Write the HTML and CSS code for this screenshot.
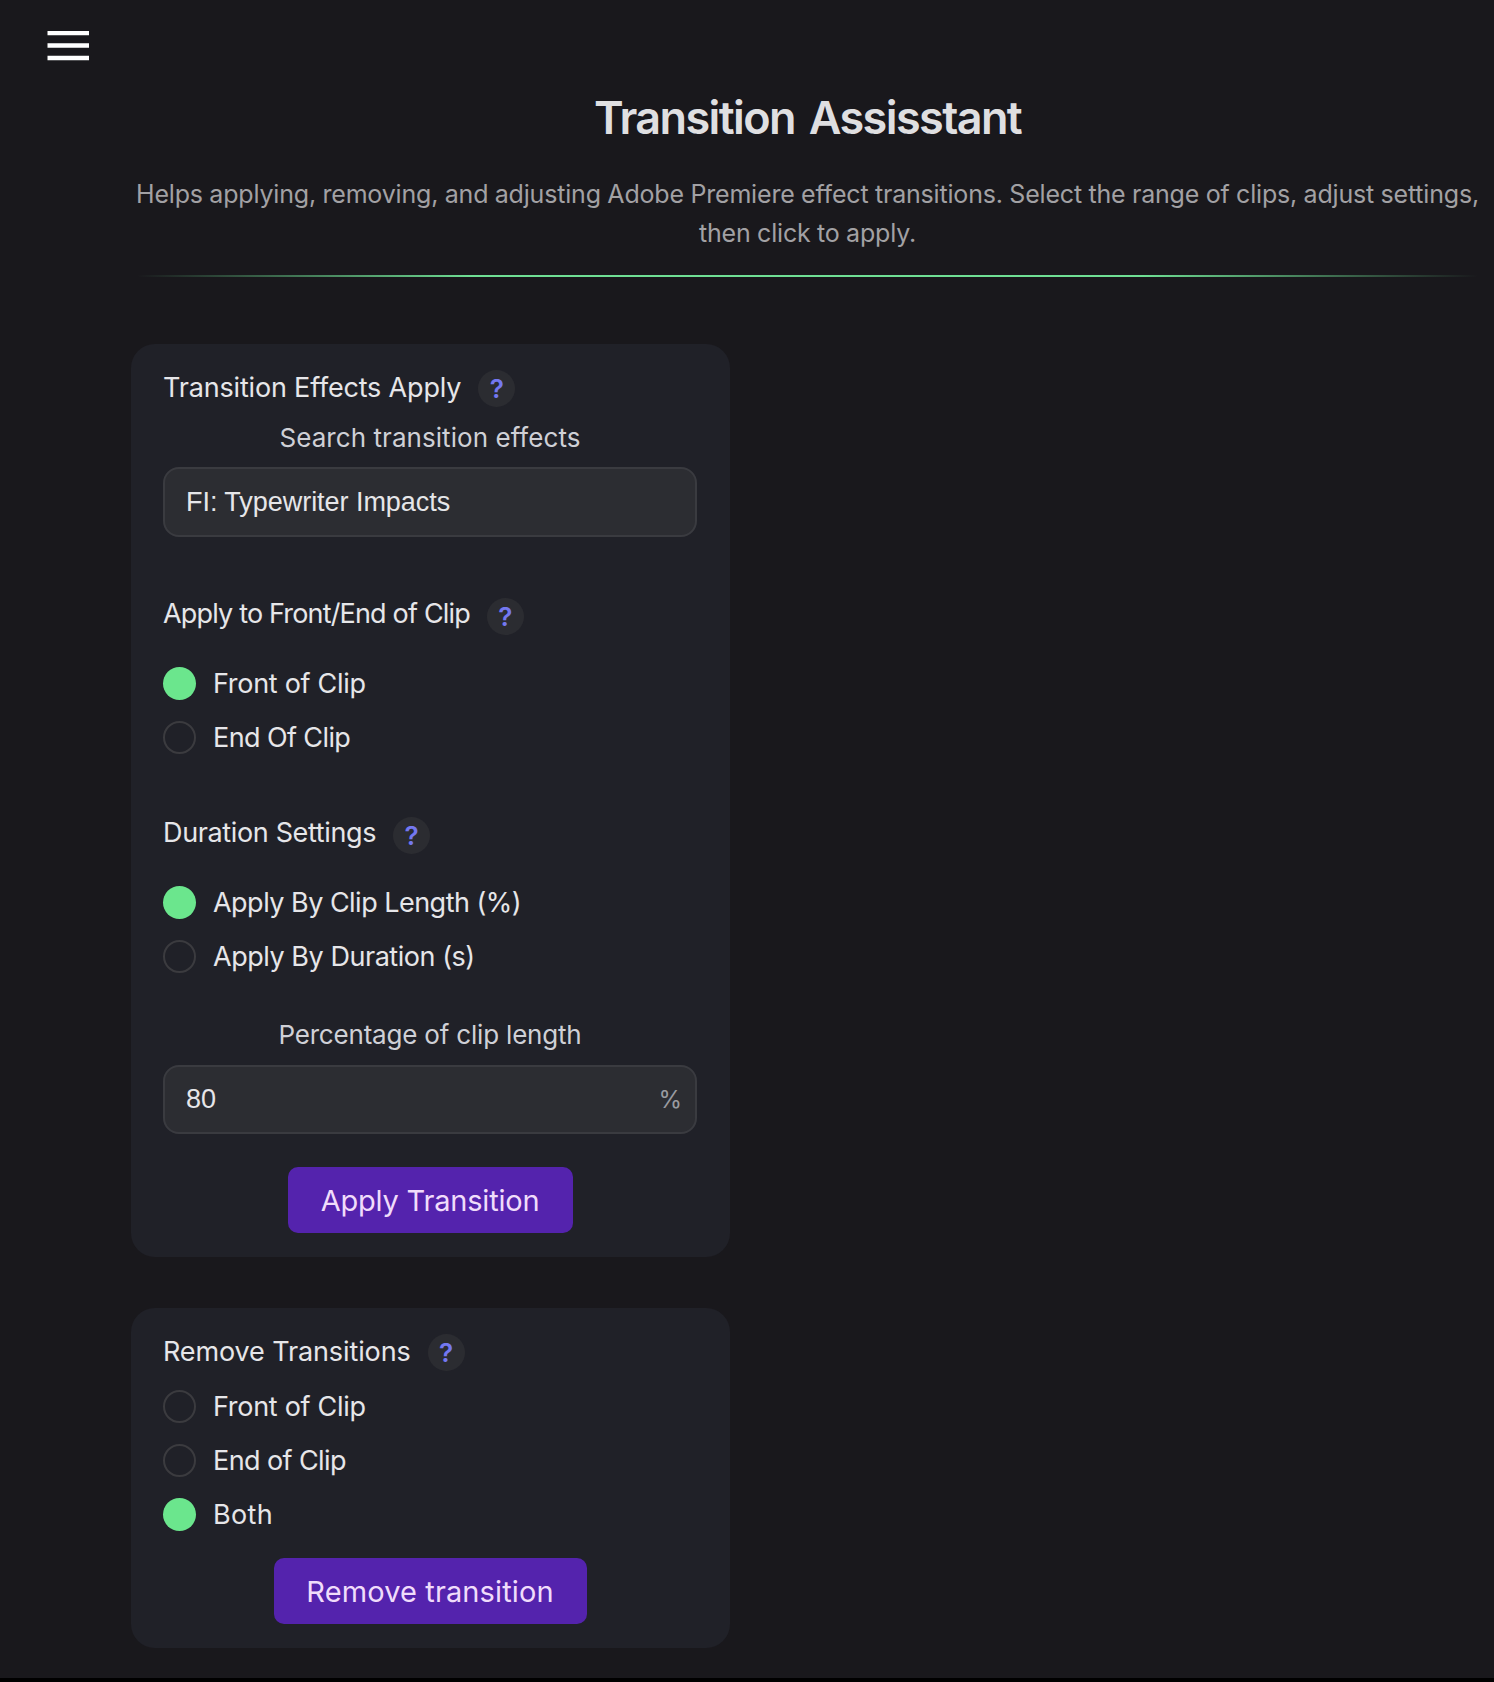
FILE: index.html
```html
<!DOCTYPE html>
<html lang="en">
<head>
<meta charset="utf-8">
<title>Transition Assisstant</title>
<link rel="stylesheet" href="styles.css">
</head>
<body>
<div class="app">
  <nav class="sidebar">
    <button class="menu" aria-label="Menu">
      <svg class="menu-icon" width="42" height="30" viewBox="0 0 42 30"><path d="M0.5 2H42M0.5 14.5H42M0.5 27H42" stroke="#fff" stroke-width="4.3"/></svg>
    </button>
  </nav>
  <main class="content">
    <header class="intro">
      <h1 class="title">Transition Assisstant</h1>
      <p class="lead">Helps applying, removing, and adjusting Adobe Premiere effect transitions. Select the range of clips, adjust settings,<br>then click to apply.</p>
      <div class="rule"></div>
    </header>
    <section class="card apply">
      <div class="heading"><h2 class="h-effects">Transition Effects Apply</h2><span class="help">?</span></div>
      <div class="label search">Search transition effects</div>
      <div class="field">FI: Typewriter Impacts</div>
      <div class="heading raised position"><h2 class="h-position">Apply to Front/End of Clip</h2><span class="help">?</span></div>
      <div class="options">
        <div class="option"><span class="radio checked"></span><span class="o-front">Front of Clip</span></div>
        <div class="option"><span class="radio"></span><span class="o-end">End Of Clip</span></div>
      </div>
      <div class="heading raised duration"><h2 class="h-duration">Duration Settings</h2><span class="help">?</span></div>
      <div class="options">
        <div class="option"><span class="radio checked"></span><span class="o-length">Apply By Clip Length (%)</span></div>
        <div class="option"><span class="radio"></span><span class="o-seconds">Apply By Duration (s)</span></div>
      </div>
      <div class="label percent">Percentage of clip length</div>
      <div class="field number"><span>80</span><span class="unit">%</span></div>
      <button class="btn btn-apply">Apply Transition</button>
    </section>
    <section class="card remove">
      <div class="heading"><h2 class="h-remove">Remove Transitions</h2><span class="help">?</span></div>
      <div class="options">
        <div class="option"><span class="radio"></span><span class="o-front">Front of Clip</span></div>
        <div class="option"><span class="radio"></span><span class="o-end">End of Clip</span></div>
        <div class="option last"><span class="radio checked"></span><span class="o-both">Both</span></div>
      </div>
      <button class="btn btn-remove">Remove transition</button>
    </section>
  </main>
</div>
</body>
</html>
```
FILE: styles.css
```css
* { box-sizing: border-box; }
body {
  margin: 0;
  background: #19181c;
  color: #e6e6e9;
  font-family: Inter, "Liberation Sans", sans-serif;
}
.app {
  display: flex;
  height: 1682px;
  border-bottom: 4px solid #000;
}
.sidebar { width: 131px; padding: 31px 0 0 47px; }
.menu { display: block; padding: 0; border: 0; background: none; }
.menu-icon { display: block; }
.content { width: 1353px; }
.intro { height: 344px; padding-top: 87px; text-align: center; }
.title { margin: 0; font-size: 45px; font-weight: 600; line-height: 62px; letter-spacing: -1.6px; word-spacing: 4px; color: #dfdfe1; }
.lead { margin: 26px -30px 0; font-size: 25px; line-height: 39px; letter-spacing: -0.18px; word-spacing: -0.35px; color: #a2a1a4; white-space: nowrap; }
.rule {
  height: 2px;
  margin: 22px 6px 0;
  background: linear-gradient(90deg, transparent, #6fdf94 25%, #6fdf94 75%, transparent);
}
.card {
  display: flex;
  flex-direction: column;
  width: 599px;
  padding: 25px 33px 24px 32px;
  border-radius: 24px;
  background: #202128;
}
.remove { margin-top: 51px; }
.heading { display: flex; align-items: center; gap: 17px; height: 38px; }
.heading h2 { margin: 0; font-size: 27px; font-weight: 400; line-height: 30px; white-space: nowrap; }
.heading .h-effects { letter-spacing: -0.18px; }
.heading .h-position { letter-spacing: -0.83px; }
.heading .h-duration { letter-spacing: -0.36px; }
.heading .h-remove { letter-spacing: -0.12px; }
.raised { align-items: flex-start; }
.raised h2 { padding-top: 1px; }
.position { margin-top: 61px; }
.duration { margin-top: 63px; }
.help {
  width: 37px;
  height: 37px;
  border-radius: 50%;
  background: #2b2c31;
  color: #7478f0;
  font-size: 26px;
  font-weight: 600;
  line-height: 38px;
  text-align: center;
}
.label { font-size: 26px; line-height: 34px; text-align: center; color: #cfd0d6; }
.search { margin: 14px 0 12px; letter-spacing: 0.06px; }
.percent { margin: 45px 0 13px; letter-spacing: -0.19px; }
.field {
  display: flex;
  align-items: center;
  justify-content: space-between;
  height: 70px;
  padding: 0 13px 0 21px;
  border: 2px solid #3a3b40;
  border-radius: 16px;
  background: #2c2d32;
  font-family: "Liberation Sans", sans-serif;
  font-size: 27px;
  letter-spacing: -0.04px;
}
.number { height: 69px; }
.unit { color: #9a9ba0; font-family: Inter, sans-serif; font-size: 24px; }
.options { display: flex; flex-direction: column; gap: 20px; margin-top: 30px; }
.remove .options { margin-top: 18px; }
.option { display: flex; align-items: center; gap: 17px; height: 34px; font-size: 27px; white-space: nowrap; }
.last { height: 35px; }
.o-front { letter-spacing: -0.29px; }
.o-end { letter-spacing: -0.6px; }
.o-length { letter-spacing: -0.52px; }
.o-seconds { letter-spacing: -0.46px; }
.o-both { letter-spacing: 0.35px; }
.radio { width: 33px; height: 33px; border: 2px solid #3b3b3f; border-radius: 50%; }
.checked { border: 0; background: #6be68d; }
.btn {
  align-self: center;
  width: 285px;
  height: 66px;
  margin-top: 33px;
  padding: 0;
  border: 0;
  border-radius: 10px;
  background: #5423ad;
  color: #f0dcfb;
  font-family: inherit;
  font-size: 29px;
  letter-spacing: -0.2px;
}
.btn-remove { width: 313px; margin-top: 26px; letter-spacing: 0.12px; }
```
